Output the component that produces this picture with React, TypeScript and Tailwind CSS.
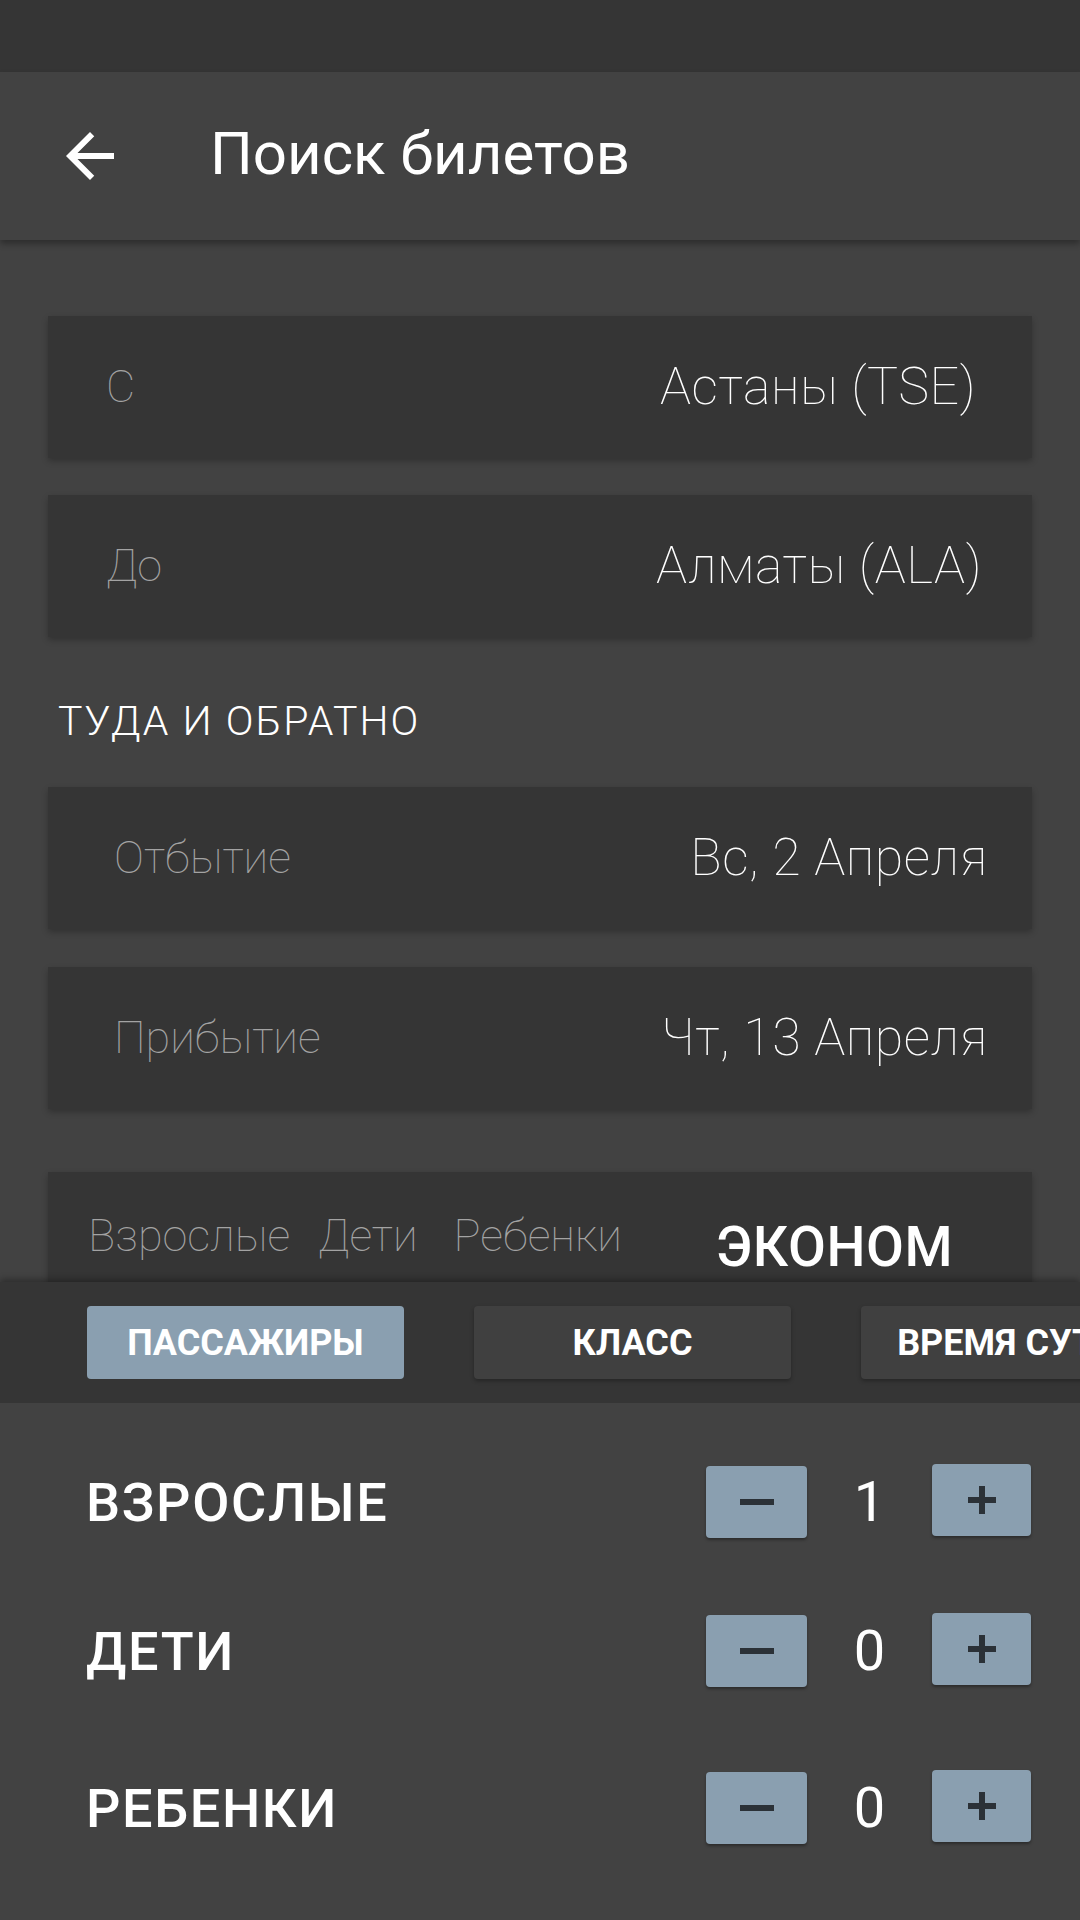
import React from 'react'

const font = { fontFamily: 'Roboto, "Noto Sans", sans-serif' }
const thin = { fontFamily: '"Roboto Thin", Roboto, "Noto Sans", sans-serif' }

const Field = ({ label, value, labelX, valueR }: { label: string; value: string; labelX: string; valueR: string }) => (
  <div className={`h-[142px] bg-[#353535] shadow-[0_3px_6px_rgba(0,0,0,0.25)] flex items-center justify-between ${labelX} ${valueR}`}>
    <span className="text-[45px] font-thin text-[#a3a3a3]" style={thin}>{label}</span>
    <span className="text-[52px] font-thin text-white tracking-[0.01em]" style={thin}>{value}</span>
  </div>
)

const Counter = ({ label, value }: { label: string; value: number }) => (
  <div className="flex items-center justify-between h-[74px]">
    <span className="text-[54px] font-medium text-white tracking-[0.03em]">{label}</span>
    <div className="flex items-center">
      <button className="w-[101px] h-[72px] rounded-[4px] bg-[#8a9fb0] shadow-[0_2px_3px_rgba(0,0,0,0.35)] flex items-center justify-center">
        <span className="block w-[34px] h-[6px] bg-[#2b3137]" />
      </button>
      <span className="w-[125px] text-center text-[56px] text-white">{value}</span>
      <button className="w-[99px] h-[72px] -translate-y-[2px] rounded-[4px] bg-[#8a9fb0] shadow-[0_2px_3px_rgba(0,0,0,0.35)] flex items-center justify-center relative">
        <span className="block w-[28px] h-[6px] bg-[#2b3137]" />
        <span className="absolute w-[6px] h-[28px] bg-[#2b3137]" />
      </button>
    </div>
  </div>
)

export default function App() {
  const tabs = ['ПАССАЖИРЫ', 'КЛАСС', 'ВРЕМЯ СУТОК']

  return (
    <div className="w-[1080px] h-[1920px] bg-[#424242] relative overflow-hidden flex flex-col" style={font}>
      {/* status bar */}
      <div className="h-[72px] bg-[#353535] shrink-0" />

      {/* toolbar */}
      <div className="h-[168px] shrink-0 bg-[#424242] shadow-[0_4px_6px_rgba(0,0,0,0.3)] flex items-center relative z-10">
        <svg className="ml-[54px]" width="72" height="72" viewBox="0 0 24 24" fill="#ffffff">
          <path d="M20 11H7.83l5.59-5.59L12 4l-8 8 8 8 1.41-1.41L7.83 13H20v-2z" />
        </svg>
        <span className="ml-[84px] -translate-y-[2px] text-[60px] text-white">Поиск билетов</span>
      </div>

      {/* form */}
      <div className="px-[48px] pt-[76px] flex flex-col">
        <Field label="С" value="Астаны (TSE)" labelX="pl-[58px]" valueR="pr-[56px]" />
        <div className="h-[37px]" />
        <Field label="До" value="Алматы (ALA)" labelX="pl-[58px]" valueR="pr-[50px]" />

        <div className="h-[150px] flex items-center pl-[10px]">
          <span className="text-[41px] font-light text-white tracking-[0.05em] translate-y-[10px]">ТУДА И ОБРАТНО</span>
        </div>

        <Field label="Отбытие" value="Вс, 2 Апреля" labelX="pl-[66px]" valueR="pr-[44px]" />
        <div className="h-[38px]" />
        <Field label="Прибытие" value="Чт, 13 Апреля" labelX="pl-[66px]" valueR="pr-[44px]" />
        <div className="h-[63px]" />

        <div className="h-[142px] bg-[#353535] shadow-[0_3px_6px_rgba(0,0,0,0.25)] flex items-start pl-[40px] pt-[30px]">
          <div className="flex text-[45px] font-thin text-[#a3a3a3]" style={thin}>
            <span>Взрослые</span>
            <span className="ml-[28px]">Дети</span>
            <span className="ml-[36px]">Ребенки</span>
          </div>
          <span className="ml-[94px] mt-[4px] text-[55px] font-medium text-white tracking-[0.01em]">ЭКОНОМ</span>
        </div>
      </div>

      {/* bottom sheet */}
      <div className="absolute left-0 right-0 bottom-0 h-[638px] bg-[#424242] shadow-[0_-3px_6px_rgba(0,0,0,0.3)] flex flex-col">
        <div className="h-[121px] bg-[#353535] flex items-start pt-[24px] pl-[87px] gap-[70px] overflow-hidden shrink-0">
          {tabs.map((t, i) => (
            <div
              key={t}
              className={`w-[317px] h-[73px] shrink-0 rounded-[4px] flex items-center justify-center text-[36px] font-bold text-white whitespace-nowrap ${
                i === 0 ? 'bg-[#8a9fb0]' : 'bg-[#404040] shadow-[0_2px_4px_rgba(0,0,0,0.3)]'
              }`}
            >
              {t}
            </div>
          ))}
        </div>
        <div className="flex flex-col pl-[86px] pr-[49px]">
          <div className="h-[62px]" />
          <Counter label="ВЗРОСЛЫЕ" value={1} />
          <div className="h-[75px]" />
          <Counter label="ДЕТИ" value={0} />
          <div className="h-[83px]" />
          <Counter label="РЕБЕНКИ" value={0} />
        </div>
      </div>
    </div>
  )
}
